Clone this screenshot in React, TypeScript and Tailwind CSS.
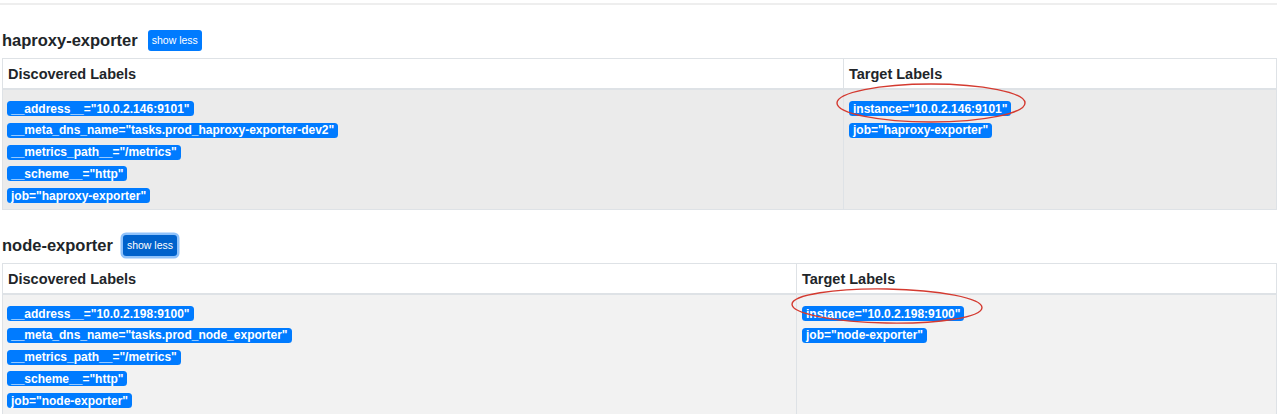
import React from 'react';

type Job = {
  name: string;
  focused?: boolean;
  splitCol: string;
  bodyBg: string;
  discovered: string[];
  target: string[];
};

const jobs: Job[] = [
  {
    name: 'haproxy-exporter',
    splitCol: 'grid-cols-[840px_1fr]',
    bodyBg: 'bg-[#ebebeb]',
    discovered: [
      '__address__="10.0.2.146:9101"',
      '__meta_dns_name="tasks.prod_haproxy-exporter-dev2"',
      '__metrics_path__="/metrics"',
      '__scheme__="http"',
      'job="haproxy-exporter"',
    ],
    target: ['instance="10.0.2.146:9101"', 'job="haproxy-exporter"'],
  },
  {
    name: 'node-exporter',
    focused: true,
    splitCol: 'grid-cols-[793px_1fr]',
    bodyBg: 'bg-[#f2f2f2]',
    discovered: [
      '__address__="10.0.2.198:9100"',
      '__meta_dns_name="tasks.prod_node_exporter"',
      '__metrics_path__="/metrics"',
      '__scheme__="http"',
      'job="node-exporter"',
    ],
    target: ['instance="10.0.2.198:9100"', 'job="node-exporter"'],
  },
];

function Badge({ text }: { text: string }) {
  return (
    <span className="inline-flex items-center h-[15px] px-[4px] rounded-[3.5px] bg-[#007bff] text-white text-[12px] font-bold leading-none whitespace-nowrap">
      {text}
    </span>
  );
}

function LabelList({ labels }: { labels: string[] }) {
  return (
    <div className="flex flex-col items-start gap-[6.75px]">
      {labels.map((l) => (
        <Badge key={l} text={l} />
      ))}
    </div>
  );
}

function JobSection({ job }: { job: Job }) {
  return (
    <section>
      <div className="flex items-center gap-[10px] ml-[2px] mt-[25px] mb-[7px] h-[21px]">
        <h2 className="text-[16.5px] font-bold text-[#212529] leading-none">{job.name}</h2>
        <button
          className={`h-[21px] px-[4px] rounded-[3px] text-white text-[10.5px] leading-none ${
            job.focused
              ? 'bg-[#0062cc] ring-[2.5px] ring-[#8fc2fb]'
              : 'bg-[#007bff]'
          }`}
        >
          show less
        </button>
      </div>
      <div className={`ml-[2px] w-[1275px] border border-[#dee2e6] grid ${job.splitCol}`}>
        <div className="h-[31px] px-[5px] pt-[3px] flex items-center border-b-2 border-[#dee2e6] text-[14.5px] font-bold text-[#212529]">
          Discovered Labels
        </div>
        <div className="h-[31px] px-[5px] pt-[3px] flex items-center border-b-2 border-l border-[#dee2e6] text-[14.5px] font-bold text-[#212529]">
          Target Labels
        </div>
        <div className={`${job.bodyBg} pl-[4px] pt-[11px] pb-[6px]`}>
          <LabelList labels={job.discovered} />
        </div>
        <div className={`${job.bodyBg} border-l border-[#dee2e6] pl-[5px] pt-[11px] pb-[6px]`}>
          <LabelList labels={job.target} />
        </div>
      </div>
    </section>
  );
}

export default function App() {
  return (
    <div className="relative w-[1280px] h-[414px] overflow-hidden bg-white font-['Liberation_Sans',Arial,sans-serif]">
      <div className="mt-[3px] h-[2px] mr-[3px] bg-[#eeeeee]" />
      {jobs.map((j) => (
        <JobSection key={j.name} job={j} />
      ))}
      <svg className="absolute inset-0 pointer-events-none" width="1280" height="414">
        <ellipse cx="931" cy="103" rx="94" ry="19" fill="none" stroke="#d43a30" strokeWidth="1.4" />
        <ellipse
          cx="887"
          cy="306"
          rx="95"
          ry="17"
          fill="none"
          stroke="#d43a30"
          strokeWidth="1.4"
          transform="rotate(1 887 306)"
        />
      </svg>
    </div>
  );
}
